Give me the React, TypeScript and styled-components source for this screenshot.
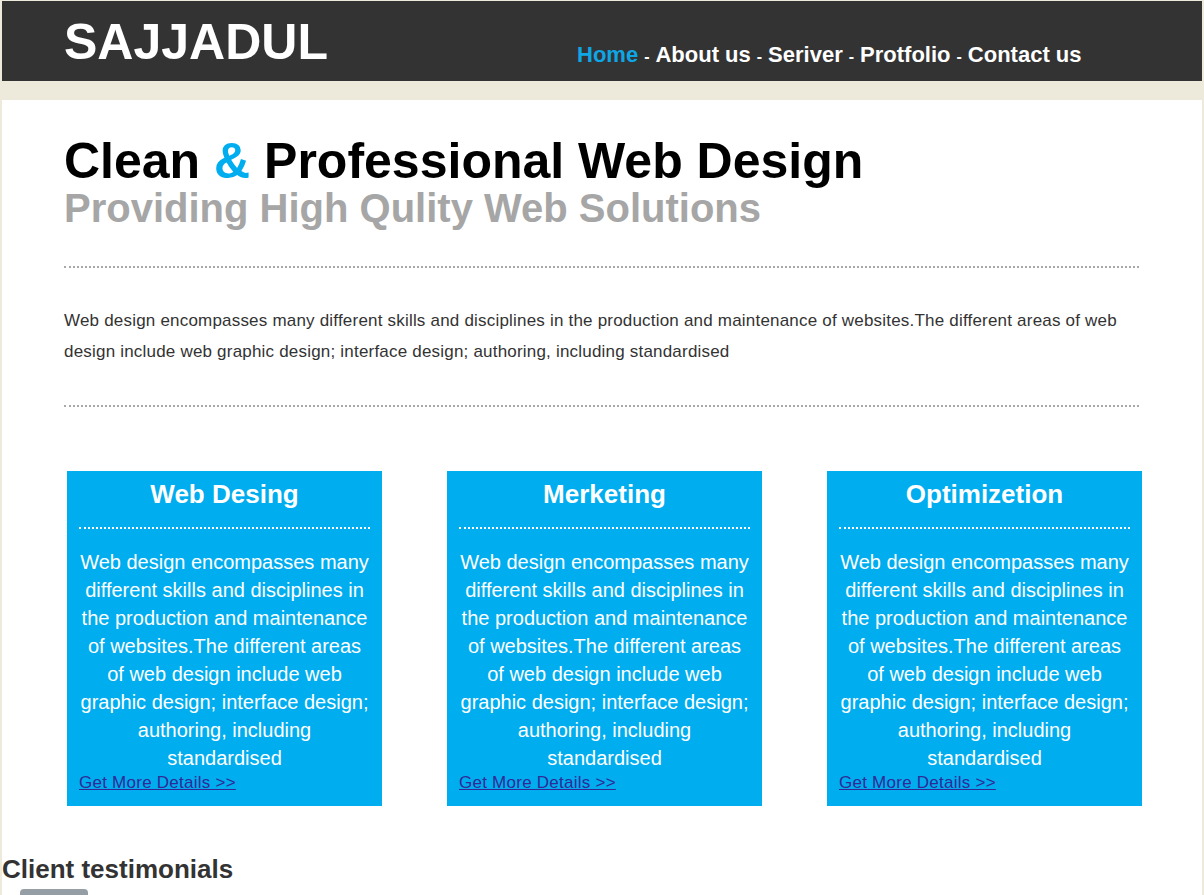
import React from "react";
import styled, { createGlobalStyle } from "styled-components";

const GlobalStyle = createGlobalStyle`
  html, body {
    margin: 0;
    padding: 0;
    background: #ede9db;
  }
  body {
    font-family: "Liberation Sans", Arial, Helvetica, sans-serif;
  }
  * { box-sizing: border-box; }
`;

const Wrapper = styled.div`
  width: 1200px;
  margin: 0 auto;
`;

const Header = styled.header`
  margin-top: 1px;
  height: 80px;
  background: #333333;
  display: grid;
  grid-template-columns: 513px auto;
  padding-left: 62px;
  align-items: start;
`;

const Logo = styled.div`
  margin-top: 16px;
  font-size: 50px;
  line-height: 50px;
  font-weight: 700;
  color: #ffffff;
  white-space: nowrap;
`;

const Nav = styled.nav`
  margin-top: 41px;
  display: flex;
  align-items: baseline;
  white-space: nowrap;
`;

const NavLink = styled.a<{ $active?: boolean }>`
  font-size: 22px;
  line-height: 26px;
  font-weight: 700;
  color: ${(p) => (p.$active ? "#0fa6e6" : "#ffffff")};
  text-decoration: none;
`;

const NavSep = styled.span`
  font-size: 16px;
  font-weight: 700;
  color: #ffffff;
  margin: 0 6px;
`;

const Page = styled.main`
  margin-top: 19px;
  background: #ffffff;
  padding-bottom: 40px;
`;

const Intro = styled.section`
  padding: 36px 63px 0 62px;
`;

const Title = styled.h1`
  margin: 0;
  font-size: 50px;
  line-height: 50px;
  font-weight: 700;
  color: #000000;
  white-space: nowrap;
`;

const Accent = styled.span`
  color: #00adef;
`;

const Subtitle = styled.h2`
  margin: 2px 0 0;
  font-size: 40px;
  line-height: 40px;
  font-weight: 700;
  color: #a6a6a6;
  white-space: nowrap;
`;

const Divider = styled.hr<{ $top: number }>`
  margin: ${(p) => p.$top}px 0 0;
  border: 0;
  border-top: 2px dotted #a9a9a9;
  height: 0;
`;

const Lead = styled.p`
  margin: 37px 0 0;
  font-size: 17px;
  line-height: 31px;
  letter-spacing: 0.2px;
  color: #333333;
`;

const Cards = styled.div`
  margin-top: 64px;
  padding-left: 3px;
  display: grid;
  grid-template-columns: repeat(3, 315px);
  column-gap: 65px;
`;

const Card = styled.article`
  width: 315px;
  height: 335px;
  background: #00adef;
  padding: 8px 12px 0;
  color: #ffffff;
  display: flex;
  flex-direction: column;
`;

const CardTitle = styled.h3`
  margin: 0;
  font-size: 26px;
  line-height: 30px;
  font-weight: 700;
  text-align: center;
`;

const CardRule = styled.hr`
  margin: 18px 0 0;
  border: 0;
  border-top: 2px dotted #ffffff;
  height: 0;
`;

const CardText = styled.p`
  margin: 19px 0 0;
  font-size: 20px;
  line-height: 28px;
  text-align: center;
`;

const CardLine = styled.span`
  display: block;
  white-space: nowrap;
`;

const MoreLink = styled.a`
  margin-top: 1px;
  font-size: 17px;
  line-height: 19.5px;
  letter-spacing: 0.25px;
  color: #302a96;
  text-decoration: underline;
  align-self: flex-start;
`;

const Testimonials = styled.section`
  margin-top: 48px;
`;

const SectionTitle = styled.h2`
  margin: 0;
  font-size: 26px;
  line-height: 30px;
  font-weight: 700;
  color: #333333;
`;

const Avatar = styled.div`
  margin: 5px 0 0 18px;
  width: 68px;
  height: 80px;
  border-radius: 4px;
  background: #959ea5;
`;

const cardLines = [
  "Web design encompasses many",
  "different skills and disciplines in",
  "the production and maintenance",
  "of websites.The different areas",
  "of web design include web",
  "graphic design; interface design;",
  "authoring, including",
  "standardised",
];

const cards = ["Web Desing", "Merketing", "Optimizetion"];
const navItems = ["Home", "About us", "Seriver", "Protfolio", "Contact us"];

export default function App() {
  return (
    <>
      <GlobalStyle />
      <Wrapper>
        <Header>
          <Logo>SAJJADUL</Logo>
          <Nav>
            {navItems.map((item, i) => (
              <React.Fragment key={item}>
                {i > 0 && <NavSep>-</NavSep>}
                <NavLink href="#" $active={i === 0}>
                  {item}
                </NavLink>
              </React.Fragment>
            ))}
          </Nav>
        </Header>
        <Page>
          <Intro>
            <Title>
              Clean <Accent>&amp;</Accent> Professional Web Design
            </Title>
            <Subtitle>Providing High Qulity Web Solutions</Subtitle>
            <Divider $top={38} />
            <Lead>
              Web design encompasses many different skills and disciplines in the
              production and maintenance of websites.The different areas of web
              design include web graphic design; interface design; authoring,
              including standardised
            </Lead>
            <Divider $top={38} />
            <Cards>
              {cards.map((title) => (
                <Card key={title}>
                  <CardTitle>{title}</CardTitle>
                  <CardRule />
                  <CardText>
                    {cardLines.map((l) => (
                      <CardLine key={l}>{l}</CardLine>
                    ))}
                  </CardText>
                  <MoreLink href="#">Get More Details &gt;&gt;</MoreLink>
                </Card>
              ))}
            </Cards>
          </Intro>
          <Testimonials>
            <SectionTitle>Client testimonials</SectionTitle>
            <Avatar />
          </Testimonials>
        </Page>
      </Wrapper>
    </>
  );
}
